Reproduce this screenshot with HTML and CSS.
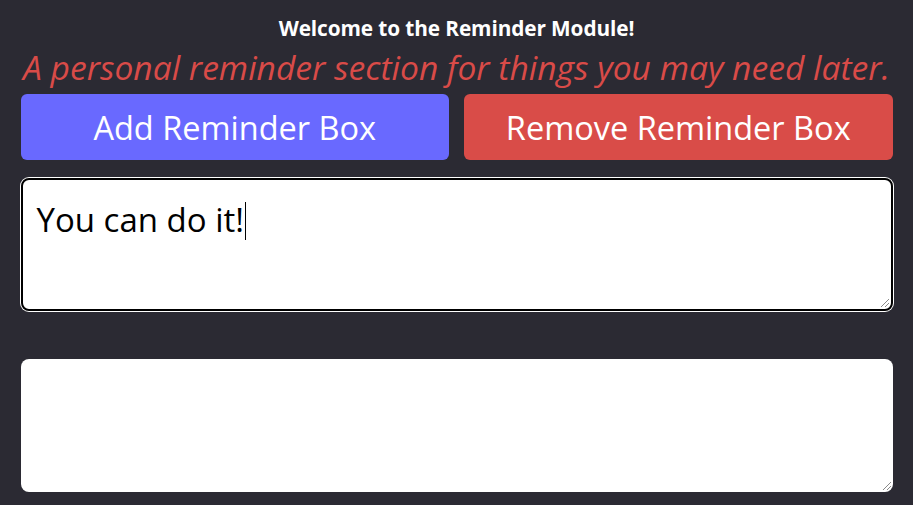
FILE: index.html
```html
<!DOCTYPE html>
<html>
<head>
<meta charset="utf-8">
<link rel="stylesheet" href="styles.css">
</head>
<body>
<main class="module">
  <h1 class="title">Welcome to the Reminder Module!</h1>
  <p class="subtitle">A personal reminder section for things you may need later.</p>
  <div class="actions">
    <button class="btn btn-add">Add Reminder Box</button>
    <button class="btn btn-remove">Remove Reminder Box</button>
  </div>
  <div class="boxes">
    <div class="box box-focused"><span class="box-text">You can do it!</span><span class="caret"></span>
      <svg class="grip" width="10" height="10" viewBox="0 0 10 10"><path d="M1 9 L9 1 M5 9 L9 5" stroke="#8a8a8a" stroke-width="1" fill="none"/></svg>
    </div>
    <div class="box">
      <svg class="grip" width="10" height="10" viewBox="0 0 10 10"><path d="M1 9 L9 1 M5 9 L9 5" stroke="#8a8a8a" stroke-width="1" fill="none"/></svg>
    </div>
  </div>
</main>
</body>
</html>
```
FILE: styles.css
```css
html, body {
  margin: 0;
  padding: 0;
  background: #2b2a33;
  height: 100%;
  overflow: hidden;
}
.module {
  width: 872px;
  margin: 0 auto;
  padding-top: 14px;
  font-family: "Open Sans", "Noto Sans", sans-serif;
}
.title {
  margin: 0;
  text-align: center;
  color: #ffffff;
  font-size: 20.8px;
  font-weight: 700;
  letter-spacing: -0.1px;
  line-height: 28px;
}
.subtitle {
  margin: -2px 0 0;
  text-align: center;
  color: #d94b48;
  font-style: italic;
  font-size: 33.6px;
  line-height: 54px;
  white-space: nowrap;
}
.actions {
  display: flex;
  gap: 15px;
}
.btn {
  flex: 1;
  height: 66px;
  border: none;
  border-radius: 6px;
  color: #ffffff;
  font-family: "Open Sans", "Noto Sans", sans-serif;
  font-size: 32.5px;
  padding: 0;
}
.btn-add { background: #6969ff; }
.btn-remove { background: #d94c48; }
.boxes {
  display: flex;
  flex-direction: column;
  gap: 48px;
  margin-top: 18px;
}
.box {
  height: 133px;
  background: #ffffff;
  border-radius: 8px;
  box-sizing: border-box;
  padding: 20px 16px;
  position: relative;
}
.box-focused {
  border: 2px solid #000000;
  box-shadow: 0 0 0 1px #ffffff;
  padding: 18px 14px;
}
.box-text {
  color: #000000;
  font-size: 33px;
  line-height: 44px;
}
.caret {
  display: inline-block;
  width: 1px;
  height: 38px;
  background: #000;
  vertical-align: -8px;
  margin-left: 1px;
}
.grip {
  position: absolute;
  right: 1px;
  bottom: 1px;
}
```
